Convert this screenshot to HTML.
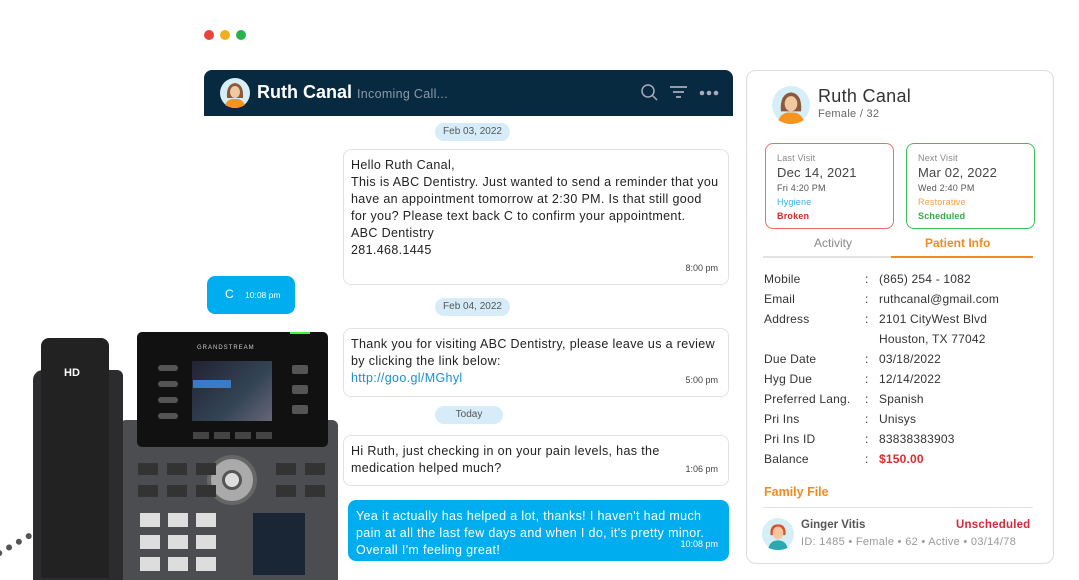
<!DOCTYPE html>
<html><head><meta charset="utf-8"><style>
*{margin:0;padding:0;box-sizing:border-box}
body{width:1079px;height:575px;background:#fff;position:relative;overflow:hidden;font-family:"Liberation Sans",sans-serif;color:#333}
.a{position:absolute}
.dot{width:10px;height:10px;border-radius:50%;top:30px}
.hdr{left:204px;top:70px;width:529px;height:46px;background:#082a41;border-radius:8px 8px 0 0}
.pill{background:#d6edf9;color:#555;font-size:10px;border-radius:10px;height:18px;line-height:18px;text-align:center}
.msg{background:#fff;border:1px solid #e2e2e2;border-radius:8px;font-size:12.5px;line-height:17px;color:#222;padding:7px 7px;letter-spacing:0.35px}
.tm{position:absolute;right:10px;bottom:7px;font-size:9px;color:#444;letter-spacing:0}
.rp{left:746px;top:70px;width:308px;height:494px;border:1px solid #ddd;border-radius:10px}
.row{position:absolute;left:764px;font-size:12px;color:#333;letter-spacing:0.2px}
.row span{position:absolute;white-space:nowrap}
</style></head><body>
<div class="a dot" style="left:204px;background:#e8443a"></div>
<div class="a dot" style="left:220px;background:#f2b01e"></div>
<div class="a dot" style="left:236px;background:#27b24a"></div>

<div class="a hdr">
 <svg class="a" style="left:16px;top:8px" width="30" height="30" viewBox="0 0 30 30"><circle cx="15" cy="15" r="15" fill="#d6eef5"/><path d="M7 20 Q6 6 15 5 Q24 6 23 20Z" fill="#8b5a3c"/><ellipse cx="15" cy="14" rx="5" ry="6" fill="#f0c9a0"/><path d="M5 27 Q8 20 15 21 Q22 20 25 27 Q20 30 15 30 Q10 30 5 27Z" fill="#f7931e"/></svg>
 <div class="a" style="left:53px;top:12px;color:#fff;font-size:18px;font-weight:bold">Ruth Canal <span style="font-size:12.5px;font-weight:normal;color:#8a9aa8;letter-spacing:0.3px">Incoming Call...</span></div>
 <svg class="a" style="left:436px;top:13px" width="20" height="20"><circle cx="8" cy="8" r="6" fill="none" stroke="#aab" stroke-width="1.5"/><line x1="12.5" y1="12.5" x2="17" y2="17" stroke="#aab" stroke-width="1.5"/></svg>
 <svg class="a" style="left:465px;top:15px" width="20" height="16"><path d="M1 2H18M4 7H15M7 12H12" stroke="#aab" stroke-width="1.8"/></svg>
 <svg class="a" style="left:495px;top:20px" width="20" height="6"><circle cx="3" cy="3" r="2.3" fill="#aab"/><circle cx="10" cy="3" r="2.3" fill="#aab"/><circle cx="17" cy="3" r="2.3" fill="#aab"/></svg>
</div>

<div class="a pill" style="left:435px;top:123px;width:75px">Feb 03, 2022</div>
<div class="a msg" style="left:343px;top:149px;width:386px;height:136px">Hello Ruth Canal,<br>This is ABC Dentistry. Just wanted to send a reminder that you have an appointment tomorrow at 2:30 PM. Is that still good for you? Please text back C to confirm your appointment.<br>ABC Dentistry<br>281.468.1445<div class="tm">8:00 pm</div></div>
<div class="a" style="left:207px;top:276px;width:88px;height:38px;background:#00aeef;border-radius:8px;color:#fff"><span class="a" style="left:18px;top:11px;font-size:12px">C</span><span class="a" style="left:38px;top:14px;font-size:8.5px">10:08 pm</span></div>
<div class="a pill" style="left:435px;top:298px;width:75px">Feb 04, 2022</div>
<div class="a msg" style="left:343px;top:328px;width:386px;height:69px">Thank you for visiting ABC Dentistry, please leave us a review by clicking the link below:<br><span style="color:#1a8fd0">http://goo.gl/MGhyl</span><div class="tm">5:00 pm</div></div>
<div class="a pill" style="left:435px;top:406px;width:68px">Today</div>
<div class="a msg" style="left:343px;top:435px;width:386px;height:51px">Hi Ruth, just checking in on your pain levels, has the medication helped much?<div class="tm">1:06 pm</div></div>
<div class="a msg" style="left:348px;top:500px;width:381px;height:61px;background:#00aeef;border-color:#00aeef;color:#fff">Yea it actually has helped a lot, thanks! I haven't had much pain at all the last few days and when I do, it's pretty minor. Overall I'm feeling great!<div class="tm" style="color:#fff">10:08 pm</div></div>

<!-- phone -->
<div class="a" style="left:0;top:540px;width:40px;height:30px;border-top:6px dotted #555;transform:rotate(-30deg)"></div>
<div class="a" style="left:120px;top:420px;width:218px;height:160px;background:#4c4d50;border-radius:6px 6px 0 0"></div>
<div class="a" style="left:33px;top:370px;width:90px;height:210px;background:#2c2c2e;border-radius:10px 6px 0 0"></div>
<div class="a" style="left:41px;top:338px;width:68px;height:240px;background:#222;border-radius:8px 8px 0 0"></div>
<div class="a" style="left:64px;top:367px;color:#fff;font-weight:bold;font-size:11px">HD</div>
<div class="a" style="left:137px;top:332px;width:191px;height:115px;background:#111;border-radius:5px"></div>
<div class="a" style="left:290px;top:332px;width:20px;height:2px;background:#3f3"></div>
<div class="a" style="left:197px;top:345px;color:#ccc;font-size:6px;letter-spacing:1px">GRANDSTREAM</div>
<div class="a" style="left:192px;top:361px;width:80px;height:60px;background:linear-gradient(135deg,#223 0%,#345 60%,#667 100%)"></div>
<div class="a" style="left:193px;top:380px;width:38px;height:8px;background:#3a7bc8"></div>
<div class="a" style="left:158px;top:365px;width:20px;height:6px;border-radius:3px;background:#555;box-shadow:0 16px #555,0 32px #555,0 48px #555"></div>
<div class="a" style="left:292px;top:365px;width:16px;height:9px;border-radius:2px;background:#555;box-shadow:0 20px #555,0 40px #555"></div>
<div class="a" style="left:193px;top:432px;width:80px;height:7px;background:repeating-linear-gradient(90deg,#444 0 16px,transparent 16px 21px)"></div>
<div class="a" style="left:207px;top:455px;width:50px;height:50px;border-radius:50%;background:#aaa;border:4px solid #666"></div>
<div class="a" style="left:222px;top:470px;width:20px;height:20px;border-radius:50%;background:#ddd;border:3px solid #555"></div>
<div class="a" style="left:253px;top:513px;width:52px;height:62px;background:#1a2535"></div>
<div class="a" style="left:140px;top:513px;width:78px;height:62px;background:repeating-linear-gradient(90deg,#ddd 0 20px,transparent 20px 28px);-webkit-mask:repeating-linear-gradient(#000 0 14px,transparent 14px 22px)"></div>
<div class="a" style="left:138px;top:463px;width:80px;height:36px;background:repeating-linear-gradient(90deg,#333 0 20px,transparent 20px 29px);-webkit-mask:repeating-linear-gradient(#000 0 12px,transparent 12px 22px)"></div>
<div class="a" style="left:276px;top:463px;width:50px;height:36px;background:repeating-linear-gradient(90deg,#333 0 20px,transparent 20px 29px);-webkit-mask:repeating-linear-gradient(#000 0 12px,transparent 12px 22px)"></div>

<!-- right panel -->
<div class="a rp"></div>
<svg class="a" style="left:772px;top:86px" width="38" height="38" viewBox="0 0 30 30"><circle cx="15" cy="15" r="15" fill="#d6eef5"/><path d="M7 20 Q6 6 15 5 Q24 6 23 20Z" fill="#8b5a3c"/><ellipse cx="15" cy="14" rx="5" ry="6" fill="#f0c9a0"/><path d="M5 27 Q8 20 15 21 Q22 20 25 27 Q20 30 15 30 Q10 30 5 27Z" fill="#f7931e"/></svg>
<div class="a" style="left:818px;top:86px;font-size:18px;color:#333;letter-spacing:0.3px">Ruth Canal</div>
<div class="a" style="left:818px;top:108px;font-size:11px;color:#666;letter-spacing:0.3px">Female / 32</div>
<div class="a" style="left:765px;top:143px;width:129px;height:86px;border:1.5px solid #ee6b6b;border-radius:8px;padding:7px 11px;font-size:9px;line-height:14px;color:#888;letter-spacing:0.2px">Last Visit<br><span style="font-size:13px;color:#444;line-height:16px">Dec 14, 2021</span><br><span style="color:#555">Fri 4:20 PM</span><br><span style="color:#3bb0e6">Hygiene</span><br><b style="color:#d62a2a">Broken</b></div>
<div class="a" style="left:906px;top:143px;width:129px;height:86px;border:1.5px solid #3cbf5a;border-radius:8px;padding:7px 11px;font-size:9px;line-height:14px;color:#888;letter-spacing:0.2px">Next Visit<br><span style="font-size:13px;color:#444;line-height:16px">Mar 02, 2022</span><br><span style="color:#555">Wed 2:40 PM</span><br><span style="color:#f7a04a">Restorative</span><br><b style="color:#2fae48">Scheduled</b></div>
<div class="a" style="left:814px;top:236px;font-size:12px;color:#888">Activity</div>
<div class="a" style="left:925px;top:236px;font-size:12px;color:#f28a1e;font-weight:bold">Patient Info</div>
<div class="a" style="left:763px;top:256px;width:128px;height:2px;background:#e3e3e3"></div>
<div class="a" style="left:891px;top:256px;width:142px;height:2px;background:#f28a1e"></div>

<div class="row" style="top:272px"><span>Mobile</span><span style="left:101px">:</span><span style="left:115px">(865) 254 - 1082</span></div>
<div class="row" style="top:292px"><span>Email</span><span style="left:101px">:</span><span style="left:115px">ruthcanal@gmail.com</span></div>
<div class="row" style="top:312px"><span>Address</span><span style="left:101px">:</span><span style="left:115px">2101 CityWest Blvd</span></div>
<div class="row" style="top:332px"><span style="left:115px">Houston, TX 77042</span></div>
<div class="row" style="top:352px"><span>Due Date</span><span style="left:101px">:</span><span style="left:115px">03/18/2022</span></div>
<div class="row" style="top:372px"><span>Hyg Due</span><span style="left:101px">:</span><span style="left:115px">12/14/2022</span></div>
<div class="row" style="top:392px"><span>Preferred Lang.</span><span style="left:101px">:</span><span style="left:115px">Spanish</span></div>
<div class="row" style="top:412px"><span>Pri Ins</span><span style="left:101px">:</span><span style="left:115px">Unisys</span></div>
<div class="row" style="top:432px"><span>Pri Ins ID</span><span style="left:101px">:</span><span style="left:115px">83838383903</span></div>
<div class="row" style="top:452px"><span>Balance</span><span style="left:101px">:</span><span style="left:115px;color:#e02b2b;font-weight:bold">$150.00</span></div>

<div class="a" style="left:764px;top:485px;font-size:12.5px;font-weight:bold;color:#f28a1e">Family File</div>
<div class="a" style="left:763px;top:507px;width:270px;height:1px;background:#e3e3e3"></div>
<svg class="a" style="left:762px;top:518px" width="32" height="32" viewBox="0 0 30 30"><circle cx="15" cy="15" r="15" fill="#d6eef5"/><path d="M8 16 Q7 6 15 6 Q23 6 22 16Z" fill="#d9502a"/><ellipse cx="15" cy="14" rx="5" ry="6" fill="#f5c7a0"/><path d="M6 28 Q8 21 15 21 Q22 21 24 28 Q20 30 15 30 Q10 30 6 28Z" fill="#2aa9b0"/></svg>
<div class="a" style="left:801px;top:519px;font-size:11.5px;font-weight:bold;color:#555">Ginger Vitis</div>
<div class="a" style="left:956px;top:519px;font-size:11.5px;font-weight:bold;color:#d62a3a;letter-spacing:0.2px">Unscheduled</div>
<div class="a" style="left:801px;top:536px;font-size:11px;color:#999;letter-spacing:0.3px">ID: 1485 • Female • 62 • Active • 03/14/78</div>
</body></html>
